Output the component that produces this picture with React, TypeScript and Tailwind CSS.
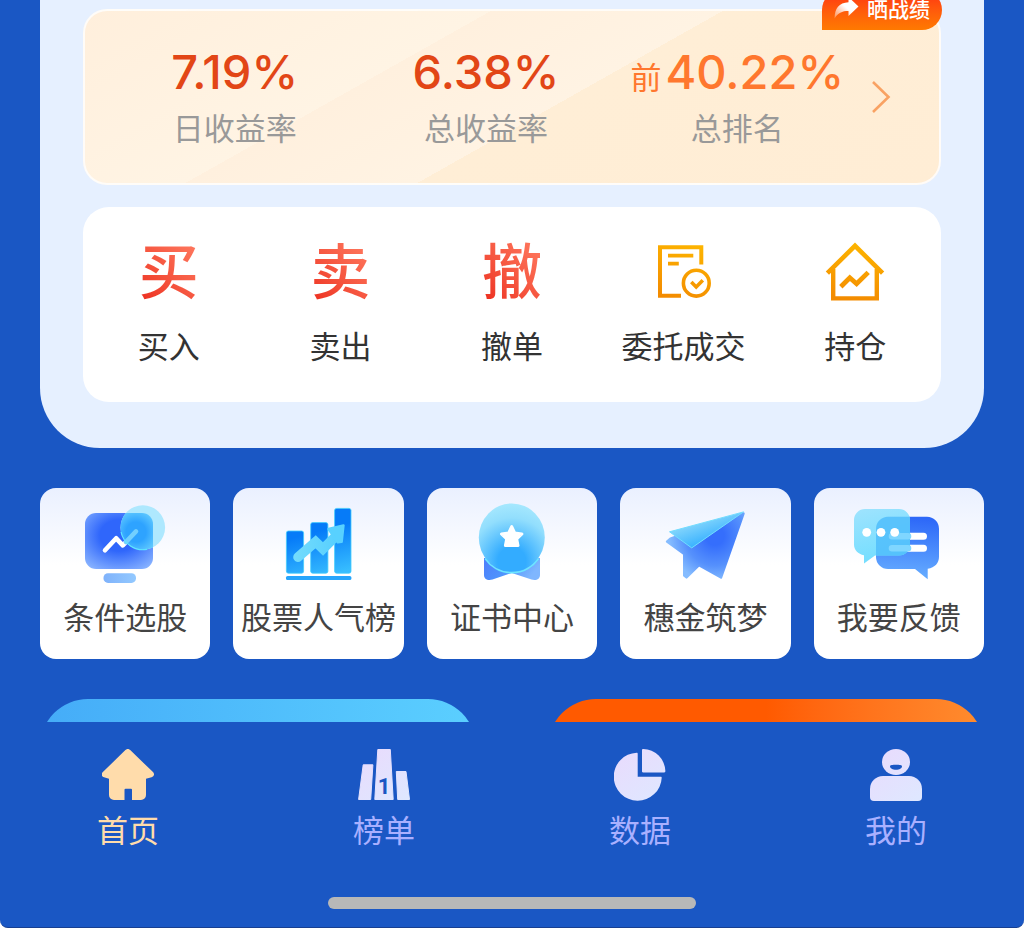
import type { ReactNode } from "react";

type Item = {
  label: string;
  icon: ReactNode;
};

type Stat = {
  label: string;
  value: string;
  prefix?: string;
  color: string;
};

const STATS: Stat[] = [
  { label: "日收益率", value: "7.19%", color: "text-[#e24616]" },
  { label: "总收益率", value: "6.38%", color: "text-[#e24616]" },
  { label: "总排名", value: "40.22%", prefix: "前", color: "text-[#ff772e]" },
];

function GlyphIcon({ char }: { char: string }) {
  return (
    <span className="h-[60px] bg-linear-to-tr from-[#ec2a1c] to-[#ff7a60] bg-clip-text text-[60px] leading-[52px] font-medium text-transparent">
      {char}
    </span>
  );
}

function OrderIcon() {
  return (
    <svg width="60" height="60" viewBox="0 0 60 60" fill="none" stroke="url(#order)">
      <defs>
        <linearGradient id="order" gradientUnits="userSpaceOnUse" x1="40" y1="2" x2="22" y2="58">
          <stop stopColor="#fdb400" />
          <stop offset="1" stopColor="#f38b00" />
        </linearGradient>
      </defs>
      <path d="M47.3 22.5V5.3H6v48.4h21" strokeWidth="4" />
      <path d="M14 13.7h25.3M14 21.7h10.8" strokeWidth="3.8" />
      <circle cx="42.3" cy="41.2" r="12.9" strokeWidth="3.6" />
      <path d="m37.3 40 4.9 4.9 6.6-6.6" strokeWidth="3.6" />
    </svg>
  );
}

function HoldingIcon() {
  return (
    <svg width="60" height="60" viewBox="0 0 60 60" fill="none" stroke="url(#holding)">
      <defs>
        <linearGradient id="holding" gradientUnits="userSpaceOnUse" x1="34" y1="2" x2="26" y2="58">
          <stop stopColor="#fdb400" />
          <stop offset="1" stopColor="#f38b00" />
        </linearGradient>
      </defs>
      <path d="M2.4 31.2 30 3.8l27.6 27.4" strokeWidth="4.6" />
      <path d="M8.2 27v29.4h43.6V27" strokeWidth="4.4" />
      <path d="m15.8 44.8 9-9 6.8 6 11.6-11.4" strokeWidth="4.8" />
    </svg>
  );
}

function ScreenerIcon() {
  return (
    <svg width="88" height="84" viewBox="0 0 88 84" fill="none">
      <defs>
        <radialGradient id="scr-a" cx="0.5" cy="0.4" r="0.7">
          <stop offset="0.4" stopColor="#2f66fb" />
          <stop offset="1" stopColor="#86b1ff" />
        </radialGradient>
        <radialGradient id="scr-b" gradientUnits="userSpaceOnUse" cx="55" cy="30" r="25">
          <stop offset="0.4" stopColor="#2ea3ff" />
          <stop offset="1" stopColor="#6cd3ff" />
        </radialGradient>
        <linearGradient id="scr-c" x1="0" y1="0" x2="1" y2="0">
          <stop stopColor="#7fb2fb" />
          <stop offset="1" stopColor="#93c9ff" />
        </linearGradient>
        <clipPath id="scr-clip">
          <rect x="4" y="11" width="68" height="56" rx="11" />
        </clipPath>
      </defs>
      <rect x="4" y="11" width="68" height="56" rx="11" fill="url(#scr-a)" />
      <rect x="22.5" y="71.3" width="32.5" height="9.6" rx="4.5" fill="url(#scr-c)" />
      <path d="m24 48.3 11.2-12 6.6 7L50 35" stroke="#fff" strokeWidth="4.6" strokeLinecap="round" strokeLinejoin="round" />
      <circle cx="61.8" cy="25.5" r="22.3" fill="#aee8fe" />
      <g clipPath="url(#scr-clip)">
        <circle cx="61.8" cy="25.5" r="22.3" fill="url(#scr-b)" />
      </g>
      <path d="m45 40 10-10.6" stroke="#72cffe" strokeWidth="4.6" strokeLinecap="round" />
      <path d="M40 30a22.3 22.3 0 0 0 26 17.3" stroke="#5ee6ff" strokeWidth="1.2" />
    </svg>
  );
}

function PopularIcon() {
  return (
    <svg width="88" height="84" viewBox="0 0 88 84" fill="none">
      <defs>
        <linearGradient id="pop-a" gradientUnits="userSpaceOnUse" x1="40" y1="30" x2="52" y2="74">
          <stop stopColor="#067bf8" />
          <stop offset="1" stopColor="#37bdff" />
        </linearGradient>
        <linearGradient id="pop-b" gradientUnits="userSpaceOnUse" x1="18" y1="0" x2="70" y2="0">
          <stop stopColor="#74dcfc" />
          <stop offset="1" stopColor="#52cdff" />
        </linearGradient>
      </defs>
      <g fill="url(#pop-a)" stroke="#43cdfd" strokeWidth="0.8">
        <rect x="11.4" y="29" width="17.2" height="42.2" rx="2" />
        <rect x="35.7" y="20.6" width="17.2" height="50.6" rx="2" />
        <rect x="59.6" y="6.4" width="16.4" height="64.8" rx="2" />
      </g>
      <rect x="11" y="74" width="65.4" height="4" rx="1.6" fill="#27a5fc" />
      <path d="m23 55.2 17.6-15.4 7.4 7.2L62 33" stroke="url(#pop-b)" strokeWidth="9.6" strokeLinecap="round" />
      <path d="m53.5 27 15-3.6-1.8 16.4-4 .4z" fill="#58d1ff" stroke="#58d1ff" strokeWidth="2.4" strokeLinejoin="round" />
    </svg>
  );
}

function CertificateIcon() {
  return (
    <svg width="88" height="84" viewBox="0 0 88 84" fill="none">
      <defs>
        <linearGradient id="cert-a" x1="0" y1="0" x2="1" y2="0.3">
          <stop stopColor="#4d7dfb" />
          <stop offset="0.5" stopColor="#4f94fc" />
          <stop offset="1" stopColor="#7fb6fe" />
        </linearGradient>
        <radialGradient id="cert-b" cx="0.5" cy="0.85" r="0.85">
          <stop offset="0.25" stopColor="#33acff" />
          <stop offset="0.75" stopColor="#92defd" />
          <stop offset="1" stopColor="#a6e8fe" />
        </radialGradient>
      </defs>
      <path
        d="M16 56h56v17c0 4-3.5 5.8-8.5 4.6L43.8 71l-19.3 6.6C19.5 78.8 16 77 16 73z"
        fill="url(#cert-a)"
      />
      <ellipse cx="43.8" cy="35.6" rx="33" ry="34.2" fill="url(#cert-b)" />
      <path d="M17 56.5a33 34 0 0 0 53.6 0" stroke="#6be6ff" strokeWidth="1.6" />
      <path
        d="m43.7 24.6 3.1 6.5 7.1.9-5.2 5 1.3 6.6H37.4l1.3-6.6-5.2-5 7.1-.9z"
        fill="#fff"
        stroke="#fff"
        strokeWidth="3"
        strokeLinejoin="round"
      />
    </svg>
  );
}

function PlaneIcon() {
  return (
    <svg width="88" height="84" viewBox="0 0 88 84" fill="none">
      <defs>
        <radialGradient id="plane-a" gradientUnits="userSpaceOnUse" cx="54" cy="34" r="46">
          <stop offset="0.2" stopColor="#356efc" />
          <stop offset="0.65" stopColor="#5691fc" />
          <stop offset="1" stopColor="#85bcff" />
        </radialGradient>
        <linearGradient id="plane-b" gradientUnits="userSpaceOnUse" x1="40" y1="18" x2="48" y2="40">
          <stop stopColor="#83d5fc" />
          <stop offset="1" stopColor="#37b1ff" />
        </linearGradient>
      </defs>
      <path
        d="M82.5 11.5 60 75.5 38 63.2 25.5 75.4l-2.3-1.8V52L6 39.6l3.4-3z"
        fill="url(#plane-a)"
        stroke="url(#plane-a)"
        strokeWidth="2.4"
        strokeLinejoin="round"
      />
      <path d="m8.5 29.8 74-19.9-51.8 36z" fill="url(#plane-b)" stroke="#72dcff" strokeLinejoin="round" />
    </svg>
  );
}

function FeedbackIcon() {
  return (
    <svg width="88" height="84" viewBox="0 0 88 84" fill="none" className="overflow-visible">
      <defs>
        <linearGradient id="fb-a" gradientUnits="userSpaceOnUse" x1="60" y1="16" x2="56" y2="72">
          <stop stopColor="#2d68f8" />
          <stop offset="1" stopColor="#62a8ff" />
        </linearGradient>
        <linearGradient id="fb-b" gradientUnits="userSpaceOnUse" x1="10" y1="8" x2="24" y2="58">
          <stop stopColor="#9ce3fe" />
          <stop offset="1" stopColor="#74deff" />
        </linearGradient>
      </defs>
      <path
        d="M33 14.7h39a12 12 0 0 1 12 12v28c0 6-4 11-11.3 12.1v10.5L60 67H33a12 12 0 0 1-12-12V26.7a12 12 0 0 1 12-12z"
        fill="url(#fb-a)"
      />
      <path d="M37 34.2h31.5M37 46.2h31.5" stroke="#fff" strokeWidth="7" strokeLinecap="round" />
      <path
        d="M10 7h34a11 11 0 0 1 11 11v24.5a11 11 0 0 1-11 11H20l-11 8v-8.2C3 51.8-1 48-1 42.5V18A11 11 0 0 1 10 7z"
        fill="url(#fb-b)"
      />
      <path d="M33 14.7h21.6A11 11 0 0 1 55 18v24.5a11 11 0 0 1-11 11H21V26.7a12 12 0 0 1 12-12z" fill="#50bdfc" opacity="0.85" />
      <path d="M37 34.2h16M37 46.2h16" stroke="#7fd6ff" strokeWidth="6.6" strokeLinecap="round" />
      <circle cx="11.7" cy="30.3" r="4.4" fill="#fff" />
      <circle cx="26" cy="30.3" r="4.4" fill="#fff" />
      <circle cx="39.7" cy="30.3" r="4.4" fill="#fff" />
    </svg>
  );
}

const LILAC = (
  <defs>
    <linearGradient id="lilac" gradientUnits="userSpaceOnUse" x1="8" y1="4" x2="44" y2="52">
      <stop stopColor="#e8dcfd" />
      <stop offset="1" stopColor="#dfe7ff" />
    </linearGradient>
  </defs>
);

function HomeIcon() {
  return (
    <svg width="52" height="52" viewBox="0 0 52 52" fill="#ffdcab">
      <path d="M23.4 1.1a3.4 3.4 0 0 1 4.8 0l22.8 22c2 2 .9 4.500-1.400 5.100L44 29.700V46a5 5 0 0 1-5 5h-9V40.800a1 1 0 0 0-1-1h-5.500a1 1 0 0 0-1 1V51H12a5 5 0 0 1-5-5V29.700l-5-1.400c-2.300-.6-3.100-3.300-1.400-5z" />
    </svg>
  );
}

function RankIcon() {
  return (
    <svg width="52" height="52" viewBox="0 0 52 52">
      {LILAC}
      <g fill="url(#lilac)" stroke="url(#lilac)" strokeLinejoin="round">
        <path d="M5.2 15.8h9.7l-2.2 34.7H.6zM19.8.5h12.5l2.9 50H16.8zM38.3 22.5H48l3.5 28H39.7z" />
      </g>
      <text x="26" y="45" textAnchor="middle" fill="#1a57c4" className="font-[Roboto,sans-serif] text-[22px] font-bold">
        1
      </text>
    </svg>
  );
}

function DataIcon() {
  return (
    <svg width="52" height="52" viewBox="0 0 52 52">
      <g fill="url(#lilac)">
        <path d="M22.7 3.7c.7 0 1 .4 1 1v23h23c.7 0 1 .3 1 1a24 24 0 1 1-25-25z" />
        <path d="M28 1.2c0-.8.5-1.2 1.2-1.2A22.8 22.8 0 0 1 51.4 22c0 .8-.4 1.4-1.2 1.4h-21c-.8 0-1.2-.4-1.2-1.2z" />
      </g>
    </svg>
  );
}

function ProfileIcon() {
  return (
    <svg width="52" height="52" viewBox="0 0 52 52">
      <g fill="url(#lilac)">
        <ellipse cx="26" cy="13" rx="14" ry="13" />
        <path d="M13 27h26a13 13 0 0 1 13 13v8a4 4 0 0 1-4 4H4a4 4 0 0 1-4-4v-8a13 13 0 0 1 13-13z" />
      </g>
      <path d="M20 17.2c0-1.2 2.6-1.4 6-1.4s6 .2 6 1.4c0 2-2.6 3.6-6 3.6s-6-1.6-6-3.6z" fill="#1a57c4" />
    </svg>
  );
}

const ACTIONS: Item[] = [
  { label: "买入", icon: <GlyphIcon char="买" /> },
  { label: "卖出", icon: <GlyphIcon char="卖" /> },
  { label: "撤单", icon: <GlyphIcon char="撤" /> },
  { label: "委托成交", icon: <OrderIcon /> },
  { label: "持仓", icon: <HoldingIcon /> },
];

const TOOLS: Item[] = [
  { label: "条件选股", icon: <ScreenerIcon /> },
  { label: "股票人气榜", icon: <PopularIcon /> },
  { label: "证书中心", icon: <CertificateIcon /> },
  { label: "穗金筑梦", icon: <PlaneIcon /> },
  { label: "我要反馈", icon: <FeedbackIcon /> },
];

const TABS: Item[] = [
  { label: "首页", icon: <HomeIcon /> },
  { label: "榜单", icon: <RankIcon /> },
  { label: "数据", icon: <DataIcon /> },
  { label: "我的", icon: <ProfileIcon /> },
];

function StatsCard() {
  return (
    <section className="relative flex items-center rounded-3xl border-2 border-white/80 bg-[linear-gradient(150.6deg,#ffefdc_0%,#fff4e4_35%,#fff0de_35%,#fff3e3_55%,#ffeed6_55%,#ffedd5_100%)] pt-8 pr-12 pb-[33px] pl-6">
      <dl className="grid flex-1 grid-cols-3">
        {STATS.map((s) => (
          <div key={s.label} className="flex flex-col-reverse items-center gap-[3px]">
            <dt className="text-[31px] leading-[46px] text-[#999]">{s.label}</dt>
            <dd className={`flex h-[58px] items-baseline gap-1 whitespace-nowrap ${s.color}`}>
              {s.prefix && <span className="text-[31px] leading-none">{s.prefix}</span>}
              <span className="font-[Inter,sans-serif] text-[47px] leading-[58px] font-medium">{s.value}</span>
            </dd>
          </div>
        ))}
      </dl>
      <button aria-label="查看排名" className="ml-2">
        <svg width="20" height="34" viewBox="0 0 20 34" fill="none" stroke="#f9a263" strokeWidth="2.6">
          <path d="m2 2 15.5 15L2 32" />
        </svg>
      </button>
      <button className="absolute -top-[21px] -right-[3px] flex h-10 items-center gap-2 rounded-tl-[20px] rounded-r-[20px] bg-linear-to-b from-[#ff2a12] to-[#ff7a00] px-3 pb-1 text-[21px] leading-4 font-medium text-white">
        <svg width="25" height="22" viewBox="0 0 25 22">
          <defs>
            <linearGradient id="share" x1="1" y1="0" x2="0" y2="1">
              <stop offset="0.5" stopColor="#fff" />
              <stop offset="1" stopColor="#fff" stopOpacity="0.3" />
            </linearGradient>
          </defs>
          <path d="M14.5 0v5.2C5 5.6.6 11.5.6 21.5c3.2-5.8 7.4-7.6 13.9-7.6v5l10-9.4z" fill="url(#share)" />
        </svg>
        晒战绩
      </button>
    </section>
  );
}

export default function App() {
  return (
    <div className="bg-white">
      <div className="flex min-h-screen flex-col overflow-hidden rounded-b-lg border-b border-[#173f91] bg-[#1a57c4] font-['Noto_Sans_CJK_SC',sans-serif]">
        <main className="px-10">
          <div className="flex flex-col gap-[22px] rounded-b-[60px] bg-[#e6f0ff] px-[43px] pt-[9px] pb-[46px]">
            <StatsCard />
            <section className="grid grid-cols-5 rounded-[26px] bg-white pt-[35px] pb-[34px]">
              {ACTIONS.map((a) => (
                <button key={a.label} className="flex flex-col items-center gap-5">
                  {a.icon}
                  <span className="text-[31px] leading-[46px] whitespace-nowrap text-[#333]">{a.label}</span>
                </button>
              ))}
            </section>
          </div>

          <section className="mt-10 grid grid-cols-5 gap-[23px]">
            {TOOLS.map((t) => (
              <button
                key={t.label}
                className="flex flex-col items-center gap-[7px] rounded-2xl bg-linear-to-b from-[#eaf0ff] to-white to-45% pt-[14px] pb-5"
              >
                {t.icon}
                <span className="text-[31px] leading-[46px] whitespace-nowrap text-[#444]">{t.label}</span>
              </button>
            ))}
          </section>

          <section className="mt-10 grid h-[23px] grid-cols-2 gap-[72px] overflow-hidden">
            <div className="h-32 rounded-[48px] bg-linear-to-r from-[#45acf8] to-[#5bcfff]" />
            <div className="h-32 rounded-[48px] bg-linear-to-r from-[#ff5a00] from-50% to-[#ff8c2e]" />
          </section>
        </main>

        <nav className="grid grid-cols-4 pt-[27px]">
          {TABS.map((t, i) => (
            <a
              key={t.label}
              href="#"
              className={`flex flex-col items-center gap-[5px] text-[31px] leading-[46px] ${i === 0 ? "text-[#ffdcab]" : "text-[#a9b0ff]"}`}
            >
              {t.icon}
              {t.label}
            </a>
          ))}
        </nav>

        <div className="mx-auto mt-auto mb-[18px] h-3 w-[36%] rounded-full bg-[#b8b8b8]" />
      </div>
    </div>
  );
}
